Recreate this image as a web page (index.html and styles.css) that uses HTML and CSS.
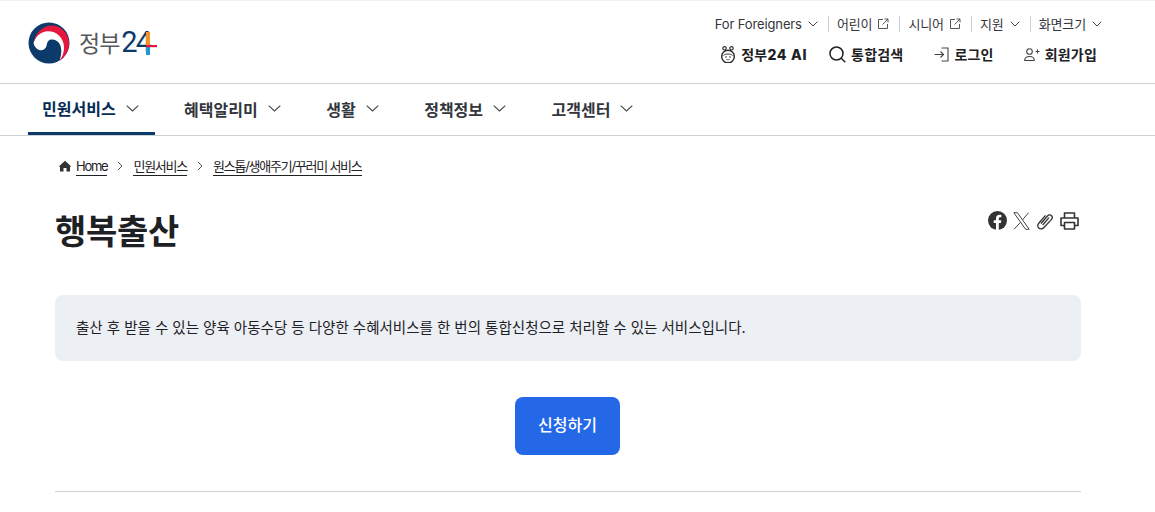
FILE: index.html

```html
<!DOCTYPE html>
<html lang="ko">
<head>
  <meta charset="UTF-8" />
  <meta name="viewport" content="width=device-width, initial-scale=1.0" />
  <title>행복출산 | 정부24</title>
  <link rel="stylesheet" href="styles.css">
</head>
<body>

  <header class="header">
    <a class="logo" href="#">
      <svg class="logo-mark" width="42" height="42" viewBox="0 0 42 42">
        <circle cx="21" cy="21" r="20.500" fill="#0b3a6b"/>
        <path d="M5.500 21C8 12 14 8.500 20 8.500 29 8.500 36 15 37.500 22 38.500 28 36 34 31.500 39 33.500 33 34 27 32 22.500 30 18.500 26 17 23 17.500 20 18 19 21 18.500 24 17.500 27.500 14 29 11 28 8 26.500 6 24 5.500 21Z" fill="#fff"/>
        <path d="M5.500 21C7 11 15 3.500 24 3.500 33 3.500 40.500 11 41 20 41.500 28 37.500 35 31.500 39 35 34 37 28 35.500 21.500 33.500 13.500 27 9 20 9.200 13 9.500 7.500 14 5.500 21Z" fill="#e5173f"/>
      </svg>
      <span class="logo-text">정부<span class="logo-num">24</span></span>
      <svg class="logo-plus" width="11" height="23" viewBox="0 0 11 23">
        <rect x="0" y="0" width="4" height="13" fill="#f39325"/>
        <rect x="0" y="15" width="4" height="8" fill="#1a9ad6"/>
        <rect x="0" y="13" width="11" height="2.200" fill="#e5173f"/>
      </svg>
    </a>

    <div class="header-right">
      <ul class="util">
        <li><a href="#">For Foreigners <svg class="chev-s" viewBox="0 0 10 6"><path d="M.7.7 5 5 9.300.7"/></svg></a></li>
        <li><a href="#">어린이 <svg class="ext" viewBox="0 0 12 12"><path d="M6 1.500H1.500v9h9V6M7.500 1H11v3.500M11 1 5.500 6.500"/></svg></a></li>
        <li><a href="#">시니어 <svg class="ext" viewBox="0 0 12 12"><path d="M6 1.500H1.500v9h9V6M7.500 1H11v3.500M11 1 5.500 6.500"/></svg></a></li>
        <li><a href="#">지원 <svg class="chev-s" viewBox="0 0 10 6"><path d="M.7.7 5 5 9.300.7"/></svg></a></li>
        <li><a href="#">화면크기 <svg class="chev-s" viewBox="0 0 10 6"><path d="M.7.7 5 5 9.300.7"/></svg></a></li>
      </ul>
      <div class="actions">
        <a href="#" class="ai">
          <svg width="16" height="17" viewBox="0 0 16 17" fill="none" stroke="#333">
            <circle cx="4.500" cy="2.300" r="1.700" stroke-width="1.200"/><circle cx="11.500" cy="2.300" r="1.700" stroke-width="1.200"/>
            <circle cx="8" cy="10.500" r="6.300" stroke-width="1.500"/>
            <path d="M3.500 9.500c1.500-2 7.500-2 9 0" stroke-width="1"/>
            <circle cx="6" cy="11" r=".8" fill="#333" stroke="none"/><circle cx="10" cy="11" r=".8" fill="#333" stroke="none"/>
            <path d="M6.500 13.300c1 .6 2 .6 3 0" stroke-width=".9"/>
          </svg>
          <span>정부<span class="ai-num">24 AI</span></span>
        </a>
        <a href="#" class="search">
          <svg width="17" height="17" viewBox="0 0 17 17" fill="none" stroke="#222" stroke-width="1.500">
            <circle cx="7.500" cy="7.500" r="6.500"/><path d="M12.200 12.200 16.300 16.300"/>
          </svg>
          통합검색
        </a>
        <a href="#" class="login">
          <svg width="15" height="15" viewBox="0 0 15 15" fill="none" stroke="#444" stroke-width="1.100">
            <path d="M7.500 1H14v13H7.500M.5 7.500h9M6.500 4.500l3 3-3 3"/>
          </svg>
          로그인
        </a>
        <a href="#" class="join">
          <svg width="16" height="13" viewBox="0 0 16 13" fill="none" stroke="#444" stroke-width="1.100">
            <circle cx="5.500" cy="3.500" r="2.800"/><path d="M.7 12.500c0-3 2-4 4.800-4s4.800 1 4.800 4zM11.500 3.500h4M13.500 1.500v4"/>
          </svg>
          회원가입
        </a>
      </div>
    </div>
  </header>

  <nav class="gnb">
    <a href="#" class="active">민원서비스 <svg class="chev" viewBox="0 0 13 7"><path d="M.7.7 6.500 6 12.300.7"/></svg></a>
    <a href="#">혜택알리미 <svg class="chev" viewBox="0 0 13 7"><path d="M.7.7 6.500 6 12.300.7"/></svg></a>
    <a href="#">생활 <svg class="chev" viewBox="0 0 13 7"><path d="M.7.7 6.500 6 12.300.7"/></svg></a>
    <a href="#">정책정보 <svg class="chev" viewBox="0 0 13 7"><path d="M.7.7 6.500 6 12.300.7"/></svg></a>
    <a href="#">고객센터 <svg class="chev" viewBox="0 0 13 7"><path d="M.7.7 6.500 6 12.300.7"/></svg></a>
  </nav>

  <main class="content">
    <div class="crumbs">
      <svg class="home" width="12" height="12" viewBox="0 0 12 12"><path d="M6 .8 0 6.200l1 .9v4.400h3.500V8h3v3.500H11V7.100l1-.9z" fill="#333"/></svg>
      <a href="#">Home</a>
      <svg class="sep" viewBox="0 0 6 10"><path d="M1 1l4 4-4 4"/></svg>
      <a href="#">민원서비스</a>
      <svg class="sep" viewBox="0 0 6 10"><path d="M1 1l4 4-4 4"/></svg>
      <a href="#">원스톱/생애주기/꾸러미 서비스</a>
    </div>

    <div class="title-row">
      <h1>행복출산</h1>
      <div class="tools">
        <svg width="19" height="19" viewBox="0 0 19 19"><circle cx="9.500" cy="9.500" r="9.500" fill="#333"/><path d="M8 19v-7H5.700V9.200H8V7.300c0-2.400 1.400-3.600 3.500-3.600.9 0 1.900.2 1.900.2v2.300h-1.100c-1.100 0-1.500.7-1.500 1.400v1.600h2.500l-.4 2.800h-2.100v7z" fill="#fff"/></svg>
        <svg width="17" height="18" viewBox="0 0 17 18" fill="none" stroke="#444" stroke-width="1"><path d="M.8.700h3.600l11.800 16.600h-3.600zM15.600.700 9.400 8M7.500 10.300 1 17.300"/></svg>
        <svg width="18" height="18" viewBox="0 0 18 18" fill="none" stroke="#333" stroke-width="1.300"><path d="M5 11.500 11.500 4c1.300-1.500 3-1.300 4-.3s1 2.600-.2 3.900L8 15.500c-1.700 1.800-4 1.800-5.300.5S1.500 12.800 3 11l6.500-7.700M6.700 13 13 5.700"/></svg>
        <svg width="19" height="18" viewBox="0 0 19 18" fill="none" stroke="#333" stroke-width="1.600" stroke-linejoin="round"><path d="M4.500 6V1h10v5M4.500 13.500H1V6h17v7.500h-3.500M4.500 10.500h10V17h-10z"/></svg>
      </div>
    </div>

    <div class="desc">출산 후 받을 수 있는 양육 아동수당 등 다양한 수혜서비스를 한 번의 통합신청으로 처리할 수 있는 서비스입니다.</div>

    <div class="apply"><a href="#" class="btn">신청하기</a></div>

    <hr class="rule">
  </main>

</body>
</html>
```

FILE: styles.css

```css
* {
  box-sizing: border-box;
}
html, body {
  height: 512px;
  overflow: hidden;
}
body {
  margin: 0;
  font-family: Inter, "Noto Sans CJK KR", sans-serif;
  background-color: #fff;
  color: #1e2124;
}
a {
  color: inherit;
  text-decoration: none;
}
svg {
  flex: none;
}

.header {
  display: flex;
  justify-content: space-between;
  height: 84px;
  padding: 0 53px 0 28px;
  border-top: 1px solid #eef1f5;
  border-bottom: 1px solid #cdd1d5;
}
.logo {
  display: flex;
  align-items: center;
  height: 42px;
  margin-top: 21px;
}
.logo-text {
  margin: -3px 0 0 9px;
  font-family: "Noto Sans CJK KR", sans-serif;
  font-size: 23px;
  font-weight: 400;
  letter-spacing: -1px;
  color: #56595c;
}
.logo-num {
  margin-left: 2px;
  font-family: Roboto, sans-serif;
  font-size: 29px;
  letter-spacing: -2px;
  color: #0b3a6b;
}
.logo-plus {
  margin: 1px 0 0 -4px;
}

.header-right {
  display: flex;
  flex-direction: column;
  align-items: flex-end;
}
.util {
  display: flex;
  align-items: center;
  height: 16px;
  margin: 15px 0 0;
  padding: 0;
  list-style: none;
  font-size: 13px;
  letter-spacing: -0.120px;
  color: #33363d;
}
.util li {
  padding: 0 0 0 8px;
  margin-left: 10px;
  border-left: 1px solid #cdd1d5;
  line-height: 16px;
}
.util li:first-child {
  padding: 0;
  margin: 0;
  border: 0;
}
.util a {
  display: flex;
  align-items: center;
  gap: 5px;
}
.chev-s {
  width: 10px;
  height: 6px;
  margin-left: 1px;
  fill: none;
  stroke: #444;
  stroke-width: 1;
}
.ext {
  width: 12px;
  height: 12px;
  fill: none;
  stroke: #555;
  stroke-width: 1;
}
.actions {
  display: flex;
  align-items: center;
  margin: 12px 5px 0 0;
  font-size: 14px;
  font-weight: 700;
  letter-spacing: 0.200px;
  color: #1e2124;
}
.actions a {
  display: flex;
  align-items: center;
  gap: 5px;
}
.ai-num {
  font-weight: 800;
  letter-spacing: 0.700px;
}
.search {
  margin-left: 22px;
}
.login {
  margin-left: 31px;
}
.join {
  margin-left: 30px;
}

.gnb {
  display: flex;
  height: 52px;
  padding-left: 28px;
  border-bottom: 1px solid #cdd1d5;
  font-size: 16px;
  font-weight: 700;
  color: #33363d;
}
.gnb a {
  display: flex;
  align-items: center;
  gap: 10px;
  height: 51px;
  padding: 0 16px 2px 14px;
  margin-right: 15.500px;
}
.gnb a.active {
  color: #052b57;
  border-bottom: 3px solid #0b3a6b;
  padding-bottom: 0;
}
.chev {
  width: 13px;
  height: 7px;
  fill: none;
  stroke: #444;
  stroke-width: 1.100;
}

.content {
  width: 1026px;
  margin-left: 55px;
}
.crumbs {
  display: flex;
  align-items: center;
  height: 20px;
  margin: 20px 0 0 4px;
  font-size: 13px;
  letter-spacing: -1.250px;
  color: #1e2124;
}
.crumbs a {
  border-bottom: 1px solid #1e2124;
  line-height: 18px;
}
.home {
  margin-right: 5px;
}
.sep {
  width: 6px;
  height: 10px;
  margin: 0 10px;
  fill: none;
  stroke: #555;
  stroke-width: 1;
}

.title-row {
  display: flex;
  justify-content: space-between;
  align-items: flex-start;
  margin-top: 31px;
}
h1 {
  margin: 0;
  font-size: 34px;
  line-height: 50px;
  font-weight: 700;
  letter-spacing: -0.300px;
  color: #1e2124;
}
.tools {
  display: flex;
  align-items: center;
  gap: 6px;
  margin: 4px 2px 0 0;
}

.desc {
  height: 66px;
  margin-top: 38px;
  padding: 0 21px;
  border-radius: 8px;
  background-color: #eceff4;
  font-size: 14.500px;
  line-height: 66px;
  color: #1e2124;
}

.apply {
  display: flex;
  justify-content: center;
  margin-top: 36px;
}
.btn {
  display: block;
  width: 105px;
  height: 58px;
  margin-right: 1px;
  border-radius: 8px;
  background-color: #2468e8;
  color: #fff;
  font-size: 16px;
  font-weight: 500;
  line-height: 56px;
  text-align: center;
}
.rule {
  height: 1px;
  margin: 36px 0 0;
  border: 0;
  background-color: #cdd1d5;
}
```
